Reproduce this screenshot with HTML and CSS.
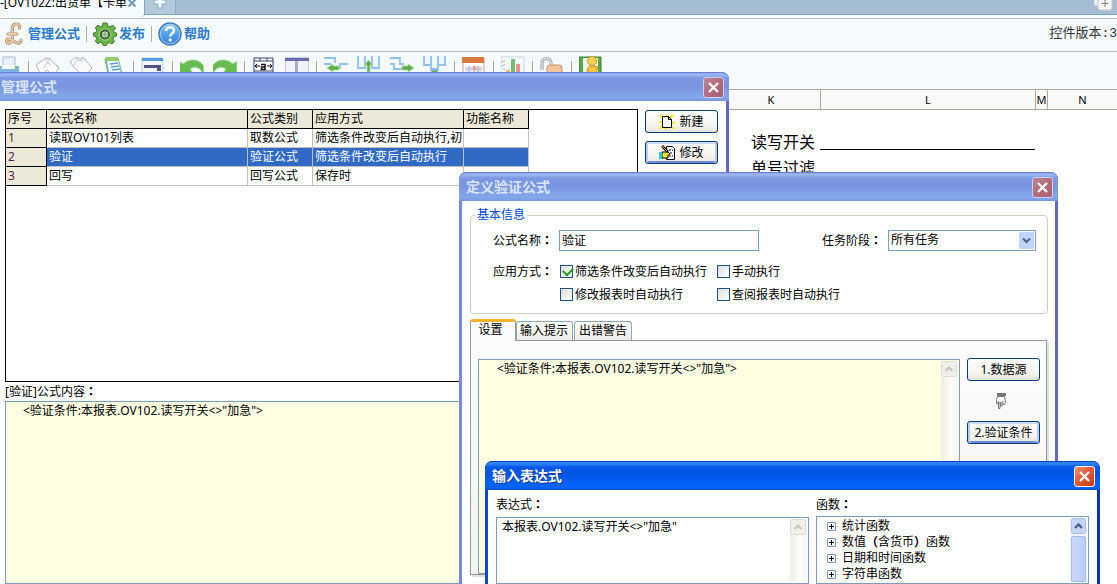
FILE: index.html
```html
<!DOCTYPE html>
<html lang="zh-CN">
<head>
<meta charset="utf-8">
<title>管理公式</title>
<link rel="stylesheet" href="styles.css">
</head>
<body>
<div class="app">
  <div class="tabstrip">
    <div class="doc-tab"><span class="doc-title">-[OV102Z:出货单【卡单</span>
      <svg class="tab-close" width="10" height="10" viewBox="0 0 10 10"><path d="M1.500 1.500l7 7M8.500 1.500l-7 7" stroke="#6f9abd" stroke-width="2"/></svg>
    </div>
    <button class="new-tab" aria-label="新标签"><svg width="14" height="14" viewBox="0 0 14 14"><path d="M5 1h4v4h4v4H9v4H5V9H1V5h4z" fill="#f4f9fd" stroke="#8aa9c2"/></svg></button>
    <button class="tab-list" aria-label="标签列表"><svg width="20" height="20" viewBox="0 0 20 20"><rect x="1" y="1" width="13" height="14" rx="2" fill="#f4f4f4" stroke="#b7c3cd"/><rect x="5" y="5" width="14" height="14" rx="2" fill="#f7f7f7" stroke="#c3cbd2"/><path d="M8.500 12.500h7M12 9v7" stroke="#7c868f"/></svg></button>
  </div>
  <div class="menubar">
    <button class="menu-item formula"><svg width="20" height="24" viewBox="0 0 20 24" fill="none" stroke-linecap="round"><path d="M15.500 6C16 3 14 1.500 11.500 2 7.500 3 8 7 8.500 11c.5 4 .5 9-3 10-3 .8-4-3-1.500-4 4-1 7 5.500 11 4 1.500-.5 2-1.500 2-3M4 12h9" stroke="#9a8068" stroke-width="3"/><path d="M15.500 6C16 3 14 1.500 11.500 2 7.500 3 8 7 8.500 11c.5 4 .5 9-3 10-3 .8-4-3-1.500-4 4-1 7 5.500 11 4 1.500-.5 2-1.500 2-3M4 12h9" stroke="#efc99f" stroke-width="1.800"/></svg><span>管理公式</span></button>
    <i class="menu-sep"></i>
    <button class="menu-item"><svg width="24" height="24" viewBox="0 0 24 24"><path d="M10 1h4l.7 3 2.300 1 2.700-1.800 2.800 2.800L20.500 8.800l.9 2L23.500 11v3l-2.600.7-1 2.300 1.600 2.500-2.500 2.500-2.600-1.600-2.200 1-.7 2.200h-3.300l-.8-2.500-2.200-.9L4.800 21.800 2.300 19.400l1.500-2.700-.9-2.100L.5 14v-3l2.500-.7.9-2.200L2.300 5.700 4.900 3.200l2.500 1.500 2-.8z" fill="#67b545" stroke="#3d7a2b"/><circle cx="12" cy="12.500" r="6.500" fill="#91cc6d"/><circle cx="12" cy="12.500" r="4" fill="#edf7ea" stroke="#3b5a3b" stroke-width="2"/><path d="M9 12.500l3-3 3 3-3 3z" fill="#8dba78"/></svg><span>发布</span></button>
    <i class="menu-sep"></i>
    <button class="menu-item help"><svg width="24" height="24" viewBox="0 0 24 24"><defs><linearGradient id="blue" x2="0" y2="1"><stop stop-color="#8fc9f5"/><stop offset=".5" stop-color="#4fa0ec"/><stop offset="1" stop-color="#2f80d8"/></linearGradient></defs><circle cx="12" cy="12" r="11" fill="url(#blue)" stroke="#3e79b4" stroke-width="1.500"/><circle cx="12" cy="12" r="9.800" fill="none" stroke="#b5dcfa" stroke-width=".8"/><path d="M8 9c0-5 8-5 8-.5 0 3-3.800 3-3.800 6" fill="none" stroke="#fff" stroke-width="2.600"/><circle cx="12.200" cy="18" r="1.700" fill="#fff"/></svg><span>帮助</span></button>
    <span class="version">控件版本:3</span>
  </div>
  <div class="toolbar">
    <div class="group">
      <svg viewBox="0 0 24 24"><path d="M6 1h12v10H6z" fill="#e5f1fc" stroke="#a5bfd9"/><path d="M0 10h22v8H0z" fill="#7db5ea"/><path d="M5 9h13v4H5z" fill="#fff"/><path d="M18 11h2v2h-2z" fill="#75cf59"/></svg>
    </div>
    <div class="group">
      <svg viewBox="0 0 24 24" fill="#fafafa" stroke="#b4b4b4"><path d="M0 9l10-7 4 1 9 9-6 8-6-6-6 5z"/><path d="M10 2l1 4 4 3M14 3l-4 5-3 5" stroke="#c8c8c8" fill="none"/></svg>
      <svg viewBox="0 0 24 24" fill="#fafafa" stroke="#b4b4b4"><path d="M1 6l6-5 4 2 3-2 9 11-8 9L4 10z"/><path d="M7 1l1 3 5 1 1-4M8 4l-4 6" fill="none" stroke="#c8c8c8"/></svg>
      <svg viewBox="0 0 24 24"><path d="M3 3l13-1 5 20H7z" fill="#65aedc" stroke="#7cbb55"/><path d="M5 5l11-1 4 18H8z" fill="#f3faff"/><path d="M3 1h12l2 4H5z" fill="#93ce6a"/><path d="M8 8l8-1M9 11l8-1M10 14l8-1" stroke="#5d9fd0" stroke-width="1.500"/></svg>
    </div>
    <div class="group">
      <svg viewBox="0 0 24 24"><path d="M1 2h21v20H1z" fill="#f1f5fa" stroke="#c7d5e3"/><path d="M1 2h21v3H1z" fill="#559be5"/><path d="M3 9h17v6h-4v-3H3z" fill="#51557f"/></svg>
    </div>
    <div class="group">
      <svg viewBox="0 0 24 24"><path d="M-1 5l4 3c7-6 15-5 20 1 1 3 1 6 0 9-2-6-8-9-13-5l3 4H-1z" fill="#65bd50" stroke="#a0d78e"/></svg>
      <svg viewBox="0 0 24 24"><path d="M24 5l-4 3C13 2 5 3 0 9c-1 3-1 6 0 9 2-6 8-9 13-5l-3 4h14z" fill="#65bd50" stroke="#a0d78e"/></svg>
    </div>
    <div class="group">
      <svg viewBox="0 0 24 24"><path d="M2 2h19v20H2z" fill="#fff" stroke="#334566"/><path d="M2 5h19M8 2v3M15 2v3M2 15h19" stroke="#334566"/><path d="M3 10h5M20 10h-5M5 8l-2 2 2 2M18 8l2 2-2 2" stroke="#111" fill="none"/><path d="M9 8.500h4v5H9.500v-2.500H13" stroke="#111" stroke-width="1.500" fill="none"/></svg>
      <svg viewBox="0 0 24 24"><path d="M0 2h24v20H0z" fill="#f2f3f7" stroke="#9aa0b8"/><path d="M0 2h24v3H0z" fill="#6c6ab0"/><path d="M10 5h3v17h-3z" fill="#a7abc4"/></svg>
    </div>
    <div class="group">
      <svg viewBox="0 0 24 24" fill="none" stroke="#8fc1ec"><path d="M-1 2h12v5M-1 8h8M16 13V8h8" stroke-width="1.800"/><path d="M3 12l6-4v2h6v4H9v2z" fill="#5cae48" stroke="#aed99e"/></svg>
      <svg viewBox="0 0 24 24" fill="#edf6fd" stroke="#8fc1ec"><path d="M1 0v12h7V0M15 0v12h7V0" stroke-width="1.800"/><path d="M11.500 4l4 5h-2.500v7h-3V9H7.500z" fill="#5cae48" stroke="#aed99e"/></svg>
      <svg viewBox="0 0 24 24" fill="none" stroke="#8fc1ec"><path d="M-1 2h11v6h4M-1 8h5v5h8" stroke-width="1.800"/><path d="M24 12l-6-4v2h-6v4h6v2z" fill="#5cae48" stroke="#aed99e"/></svg>
      <svg viewBox="0 0 24 24" fill="#edf6fd" stroke="#8fc1ec"><path d="M1 0v9h7v4h7V9h7V0M8 0v9M15 0v9" stroke-width="1.800"/><path d="M11.500 19l-4-5h8z" fill="#5cae48"/></svg>
    </div>
    <div class="group">
      <svg viewBox="0 0 24 24"><path d="M1 2h21v20H1z" fill="#fff" stroke="#c5a08c"/><path d="M0 1h22v6H0z" fill="#d67a3e"/><path d="M3 10h17v10H3z" fill="#e5e9f1"/><path d="M3 13h17M7 10v10M12 10v10M16 10v10" stroke="#aab3c7"/><path d="M11 10h3v4h-3z" fill="#efa08a"/></svg>
    </div>
    <div class="group">
      <svg viewBox="0 0 24 24"><path d="M0 1h23v21H0z" fill="#fbfcfd" stroke="#c9d2d9"/><path d="M3 4v16M0 6h3M0 10h3" stroke="#a0a8ad" stroke-dasharray="2 2"/><path d="M10 3h4v19h-4z" fill="#6fbb78"/><path d="M15 8h4v14h-4z" fill="#ec8f91"/><path d="M5 14h4v8H5z" fill="#f0b866"/></svg>
    </div>
    <div class="group">
      <svg viewBox="0 0 24 24"><path d="M2 14V7c0-6 9-6 9 0v5" fill="none" stroke="#929292" stroke-width="3"/><path d="M2 14V7c0-6 9-6 9 0v5" fill="none" stroke="#e5e5e5" stroke-width="1.500"/><rect x="7" y="9" width="15" height="13" rx="3" fill="#f3c59c" stroke="#ca906a"/></svg>
    </div>
    <div class="group">
      <svg viewBox="0 0 24 24"><path d="M0 1h22v21H0z" fill="#55a944" stroke="#34862b"/><path d="M4 2h15v14H4z" fill="#f1f6f8"/><circle cx="13" cy="5" r="4.500" fill="#fbcf4f" stroke="#d9952a"/><path d="M8 17c0-7 3-8 6-7l5 1-2 6z" fill="#fbc63b" stroke="#cf8725"/></svg>
    </div>
  </div>
  <div class="colheads"><span></span><span>K</span><span>L</span><span>M</span><span>N</span></div>
  <div class="sheet">
    <label class="sheet-label" for="rw">读写开关</label><input id="rw" class="sheet-line">
    <span class="sheet-label">单号过滤</span>
  </div>
</div>

<section class="window manager">
  <header class="titlebar"><h1>管理公式</h1><button class="close" aria-label="关闭"><svg viewBox="0 0 13 13"><path d="M2 2l9 9M11 2l-9 9"/></svg></button></header>
  <div class="manager-body">
    <div class="manager-main">
      <div class="listbox">
        <table class="formulas">
          <colgroup><col class="c-no"><col class="c-name"><col class="c-type"><col class="c-mode"><col class="c-type"></colgroup>
          <thead><tr><th>序号</th><th>公式名称</th><th>公式类别</th><th>应用方式</th><th>功能名称</th></tr></thead>
          <tbody>
            <tr><th class="first">1</th><td>读取OV101列表</td><td>取数公式</td><td>筛选条件改变后自动执行,初</td><td></td></tr>
            <tr class="selected"><th>2</th><td>验证</td><td>验证公式</td><td>筛选条件改变后自动执行</td><td></td></tr>
            <tr><th>3</th><td>回写</td><td>回写公式</td><td>保存时</td><td></td></tr>
          </tbody>
        </table>
      </div>
      <label class="content-label" for="content">[验证]公式内容<span class="colon">：</span></label>
      <textarea id="content" class="memo yellow" readonly>&lt;验证条件:本报表.OV102.读写开关&lt;&gt;"加急"&gt;</textarea>
    </div>
    <div class="manager-actions">
      <button class="btn"><svg width="16" height="16" viewBox="0 0 16 16"><path d="M1 1l3 3M7 0v3M14 1l-3 3M0 8h3M1 15l3-3M13 9h3M13 13l2 2M7 13v3" stroke="#f5ee00" stroke-width="2"/><path d="M3.500 2.500h6l3 3v8h-9z" fill="#fff" stroke="#000"/><path d="M9.500 2.500v3h3" fill="none" stroke="#000"/></svg>新建</button>
      <button class="btn default"><svg width="16" height="16" viewBox="0 0 16 16"><path d="M7.500 1.500h6l2 2v11h-8z" fill="#fff" stroke="#000"/><path d="M10 5h4M11 8h3M10 11h4" stroke="#000" stroke-dasharray="2 1"/><path d="M3 7h6l2 2-2 1v3H3z" fill="#f7ed35" stroke="#000"/><path d="M0 7h3v7H0z" fill="#28cbe0"/><path d="M3 1l6 6" stroke="#000" stroke-width="2.500"/><path d="M3 1l5 5" stroke="#e3a32f"/></svg>修改</button>
    </div>
  </div>
</section>

<section class="window definer">
  <header class="titlebar"><h2>定义验证公式</h2><button class="close" aria-label="关闭"><svg viewBox="0 0 13 13"><path d="M2 2l9 9M11 2l-9 9"/></svg></button></header>
  <div class="definer-body">
    <fieldset class="basic">
      <legend>基本信息</legend>
      <div class="row name-row">
        <label for="fname">公式名称<span class="colon">：</span></label><input id="fname" class="field" value="验证">
        <label for="stage" class="stage-label">任务阶段<span class="colon">：</span></label>
        <span class="combo"><select id="stage"><option>所有任务</option></select><svg width="15" height="17" viewBox="0 0 15 17"><rect width="15" height="17" rx="1" fill="#c2d3fc"/><path d="M4 6.500l3.500 3.500L11 6.500" fill="none" stroke="#4d6185" stroke-width="2"/></svg></span>
      </div>
      <div class="modes">
        <span>应用方式<span class="colon">：</span></span>
        <label><input type="checkbox" checked>筛选条件改变后自动执行</label>
        <label><input type="checkbox">手动执行</label>
        <label class="second"><input type="checkbox">修改报表时自动执行</label>
        <label><input type="checkbox">查阅报表时自动执行</label>
      </div>
    </fieldset>
    <div class="tabs" role="tablist"><button class="tab active" role="tab">设置</button><button class="tab" role="tab">输入提示</button><button class="tab" role="tab">出错警告</button></div>
    <div class="panel">
      <div class="memo-box yellow-box"><textarea class="memo yellow" aria-label="验证条件">&lt;验证条件:本报表.OV102.读写开关&lt;&gt;"加急"&gt;</textarea>
        <div class="scroll"><svg width="17" height="17" viewBox="0 0 17 17"><rect x=".5" y=".5" width="15" height="15" rx="2" fill="#f0f0ea" stroke="#dddccf"/><path d="M4.500 10L8 6.500l3.500 3.500" fill="none" stroke="#c5c5ba" stroke-width="2"/></svg></div></div>
      <div class="steps">
        <button class="btn">1.数据源</button>
        <svg class="hand" width="12" height="18" viewBox="0 0 12 18"><path d="M2 1h9v3H2z" fill="#777"/><path d="M2.500 4.500h7l1 6-1 2H8V9M2.500 4.500l-1 3v4h2M3.500 9v7.500H5V10M5.500 10v4H7v-4" fill="#fff" stroke="#777"/></svg>
        <button class="btn default">2.验证条件</button>
      </div>
    </div>
  </div>
</section>

<section class="window expression active-window">
  <header class="titlebar"><h2>输入表达式</h2><button class="close" aria-label="关闭"><svg viewBox="0 0 13 13"><path d="M2 2l9 9M11 2l-9 9"/></svg></button></header>
  <div class="expression-body">
    <div class="expr-col">
      <label for="expr">表达式<span class="colon">：</span></label>
      <div class="memo-box"><textarea id="expr" class="memo">本报表.OV102.读写开关&lt;&gt;"加急"</textarea>
        <div class="scroll"><svg width="17" height="17" viewBox="0 0 17 17"><rect x=".5" y=".5" width="15" height="15" rx="2" fill="#f0f0ea" stroke="#dddccf"/><path d="M4.500 10L8 6.500l3.500 3.500" fill="none" stroke="#c5c5ba" stroke-width="2"/></svg></div></div>
    </div>
    <div class="func-col">
      <span>函数<span class="colon">：</span></span>
      <div class="memo-box">
        <ul class="tree">
          <li><i></i>统计函数</li><li><i></i>数值<span class="colon">（</span>含货币<span class="colon">）</span>函数</li><li><i></i>日期和时间函数</li><li><i></i>字符串函数</li>
        </ul>
        <div class="scroll blue"><svg width="17" height="17" viewBox="0 0 17 17"><rect x="1.500" y=".5" width="14" height="15" rx="2" fill="#c5d5fd" stroke="#a9bff2"/><path d="M5 10l3.500-3.500L12 10" fill="none" stroke="#4d6185" stroke-width="2.400"/></svg><b></b></div>
      </div>
    </div>
  </div>
</section>
</body>
</html>
```
FILE: styles.css
```css
* { box-sizing: border-box; }
html, body { height: 100%; }
body {
  margin: 0;
  position: relative;
  overflow: hidden;
  background: #fff;
  color: #000;
  font: 12px/16px "Noto Sans", "Noto Sans CJK SC", sans-serif;
}
button, input, textarea, select { font: inherit; color: inherit; margin: 0; }
svg { display: block; flex: none; }
h1, h2 { margin: 0; font-size: 14px; line-height: 20px; font-weight: 700; }
.colon { font-family: "Noto Sans CJK TC", sans-serif; font-weight: 700; font-feature-settings: "locl" 0; }

/* Application frame */
.app { display: flex; flex-direction: column; height: 100%; }
.tabstrip {
  display: flex;
  flex: none;
  height: 27px;
  margin-top: -12px;
  background: #a5bdd2;
  border-bottom: 1px solid #7ea5c6;
}
.doc-tab {
  display: flex;
  align-items: center;
  justify-content: space-between;
  width: 145px;
  height: 29px;
  padding: 0 8px 0 0;
  background: #f5faff;
  border-right: 1px solid #7ea5c6;
  border-radius: 0 0 4px 0;
  white-space: nowrap;
}
.new-tab {
  width: 31px;
  padding: 2px 0 0 8px;
  border: 0;
  border-right: 1px solid #8eabc5;
  background: #b3c9dc;
}
.tab-list { margin-left: auto; padding: 0 4px 0 0; border: 0; background: none; }
.menubar {
  display: flex;
  flex: none;
  align-items: center;
  height: 34px;
  margin-top: 3px;
  padding: 0 0 3px 4px;
  border: 1px solid #b9bdc0;
  border-width: 1px 0;
  background: #f5faff;
}
.menu-item {
  display: flex;
  align-items: center;
  gap: 2px;
  padding: 0;
  border: 0;
  background: none;
  color: #2a7bcb;
  font-size: 13px;
  font-weight: 700;
}
.menu-item span { padding-bottom: 2px; }
.formula { gap: 4px; }
.menu-sep { width: 1px; height: 16px; margin: 0 6px; background: #b0a89c; }
.version { margin-left: auto; color: #333; font-size: 13px; font-family: "Liberation Mono", "Noto Sans CJK SC", monospace; }
.toolbar {
  display: flex;
  flex: none;
  height: 37px;
  padding-top: 4px;
  background: #f5faff;
}
.group { display: flex; gap: 9px; }
.group:first-child { margin-left: -3px; }
.group + .group::before { content: ""; width: 1px; height: 20px; margin: 5px -2px 0 7px; background: #aaa396; }
.group svg { width: 24px; height: 24px; }
.colheads {
  display: grid;
  grid-template-columns: 722px 99px 215px 12px 1fr;
  flex: none;
  height: 21px;
  border: 1px solid #aca899;
  border-width: 1px 0;
  background: #f9f9f9;
  font-size: 11px;
  line-height: 20px;
  text-align: center;
}
.colheads span + span { border-right: 1px solid #aca899; }
.colheads span:last-child { border: 0; }
.sheet {
  display: grid;
  grid-template-columns: 69px 215px;
  grid-auto-rows: 26px;
  padding: 19px 0 0 751px;
  font-size: 16px;
  line-height: 26px;
}
.sheet-label { white-space: nowrap; }
.sheet-line { height: 21px; border: 0; border-bottom: 1px solid #000; background: none; }

/* Windows */
.window {
  position: absolute;
  bottom: 0;
  display: flex;
  flex-direction: column;
  border: 3px solid #7489df;
  border-right-color: #6368cb;
  border-width: 0 3px;
  border-radius: 8px 8px 0 0;
  background: #fff;
}
.manager { left: -4px; top: 72px; width: 733px; }
.definer { left: 459px; top: 172px; width: 599px; }
.expression { left: 485px; top: 461px; width: 615px; }
.titlebar {
  display: flex;
  flex: none;
  align-items: center;
  justify-content: space-between;
  height: 29px;
  margin: 0 -3px;
  padding: 1px 5px 0 7px;
  border: 1px solid #6b7cd8;
  border-width: 1px 0 0;
  border-radius: 7px 7px 0 0;
  background: linear-gradient(#8facec 0, #9ab5ee 2px, #7d98e2 5px, #7a95e0 14px, #83a8ea 24px, #7893df 29px);
  color: #dae5fb;
}
.titlebar h1, .titlebar h2 { padding-bottom: 2px; }
.manager .titlebar { padding-left: 5px; }
.close {
  width: 21px;
  height: 21px;
  padding: 3px;
  border: 1px solid #c9d2f3;
  border-radius: 3px;
  background: linear-gradient(135deg, #bd8494, #b36b7c 50%, #a8606f);
}
.close svg { width: 13px; height: 13px; stroke: #fff; stroke-width: 2.4; }
.active-window { border-color: #0b47d8; border-right-color: #0831b5; }
.active-window .titlebar {
  border-color: #0a44c4;
  background: linear-gradient(#2a84f8 0, #2f83f5 2px, #0558e8 5px, #0054e3 13px, #0064fa 22px, #0062f5 26px, #0247cf 29px);
  color: #fff;
  text-shadow: 1px 1px #0a318c;
}
.active-window .close { border-color: #fff; background: linear-gradient(135deg, #ee9475, #e25a35 45%, #c93c12); }

/* Shared controls */
.btn {
  display: flex;
  align-items: center;
  justify-content: center;
  gap: 4px;
  width: 73px;
  height: 23px;
  padding: 0;
  border: 1px solid #003c74;
  border-radius: 3px;
  background: linear-gradient(#fff, #f4f3ee 70%, #e6e3da);
  white-space: nowrap;
}
.btn.default { box-shadow: inset 0 2px #cddcfb, inset 2px 0 #b3cbf5, inset -2px 0 #b3cbf5, inset 0 -2px #6f8bdc; }
.memo {
  display: block;
  flex: 1;
  min-width: 0;
  padding: 0 4px;
  border: 0;
  outline: 0;
  resize: none;
  overflow: hidden;
  background: #fff;
}
.memo.yellow { padding-left: 17px; background: #ffffe1; }
.memo-box { display: flex; flex: 1; padding: 1px; border: 1px solid #7f9db9; background: #fff; }
.yellow-box { background: #ffffe1; }
.scroll { width: 17px; background: linear-gradient(90deg, #efeee7, #fdfdfa 60%, #f5f4ee); }
.scroll.blue { display: flex; flex-direction: column; background: #f3f4f8; }
.scroll b { flex: 1; margin: 1px 1px 0; border: 1px solid #a5bbf0; border-radius: 2px 2px 0 0; background: linear-gradient(90deg, #cad8fd, #bccefa); }

/* Formula manager */
.manager-body { display: flex; flex: 1; gap: 7px; padding: 8px 8px 0 6px; }
.manager-main { display: flex; flex-direction: column; flex: 1; }
.manager-actions { display: flex; flex-direction: column; gap: 8px; padding-top: 1px; }
.listbox { flex: 0 0 273px; border: 1px solid #000; }
.formulas { width: 523px; table-layout: fixed; border-collapse: separate; border-spacing: 0; line-height: 18px; }
.c-no { width: 41px; }
.c-name { width: 201px; }
.c-type { width: 65px; }
.c-mode { width: 151px; }
.formulas th, .formulas td {
  height: 19px;
  padding: 0 0 0 2px;
  border: 1px solid #c0c0c0;
  border-width: 0 1px 1px 0;
  text-align: left;
  font-weight: 400;
  white-space: nowrap;
  overflow: hidden;
}
.formulas th { border-color: #000; background: #ece9d8; }
.formulas tbody th { color: #5c2050; }
.formulas tbody th.first { color: #4a3420; }
.formulas .selected td { background: #316ac5; color: #fff; }
.content-label { flex: none; line-height: 18px; }
.manager .memo { padding: 1px 17px; border: 1px solid #7f9db9; }

/* Formula definition */
.definer-body { display: flex; flex: 1; flex-direction: column; padding: 6px 7px 9px 8px; }
.basic { min-width: 0; height: 107px; margin: 0; padding: 7px 11px 0 22px; border: 1px solid #d0d0bf; border-radius: 4px; }
.basic legend { margin-left: -18px; padding: 0 2px; color: #0046d5; }
.row { display: flex; align-items: center; }
.row label { width: 66px; }
.field { width: 200px; height: 21px; padding: 0 2px 2px; border: 1px solid #7f9db9; }
.name-row .stage-label { margin-left: auto; }
.combo { position: relative; width: 148px; height: 21px; border: 1px solid #7f9db9; }
.combo select { width: 100%; height: 19px; padding: 0 2px 1px; border: 0; appearance: none; background: #fff; }
.combo svg { position: absolute; right: 1px; top: 1px; pointer-events: none; }
.modes { display: grid; grid-template-columns: 67px 157px 1fr; grid-auto-rows: 23px; align-items: center; margin-top: 9px; white-space: nowrap; }
.modes .second { grid-column: 2; }
.modes label { display: flex; align-items: center; gap: 2px; }
.modes input { appearance: none; width: 13px; height: 13px; border: 1px solid #1d5281; background: linear-gradient(135deg, #dededa, #fff); }
.modes input:checked::after { content: ""; display: block; width: 8px; height: 5px; margin: 1px 2px; border: solid #21a121; border-width: 0 0 2px 2px; transform: rotate(-45deg); }
.tabs { display: flex; align-items: flex-end; flex: none; height: 21px; margin-top: 5px; }
.tab {
  height: 19px;
  padding: 0 4px;
  border: 1px solid #91a7b4;
  border-bottom: 0;
  border-radius: 3px 3px 0 0;
  background: linear-gradient(#fff, #ecebe6);
  white-space: nowrap;
}
.tab + .tab { padding: 0 4px 0 3px; }
.tab + .tab + .tab { margin-left: 1px; padding: 0 4px; }
.tab.active { z-index: 1; width: 46px; height: 22px; margin-bottom: -1px; padding: 0 12px 3px 7px; border-color: #919b9c; border-top: 3px solid #f9b22f; background: #fcfcfe; }
.panel {
  display: flex;
  flex: 1;
  gap: 7px;
  margin-right: 1px;
  padding: 18px 6px 0 7px;
  border: 1px solid #919b9c;
  background: linear-gradient(#fcfcfe, #f4f3ee);
  box-shadow: 2px 2px #e3e1d5;
}
.panel .btn { flex: none; }
.steps { display: flex; flex-direction: column; align-items: center; gap: 11px; margin-top: -1px; }
.hand { margin-right: 6px; }

/* Expression editor */
.expression-body { display: grid; grid-template-columns: 313px 273px; gap: 7px; flex: 1; padding: 6px 8px 0; }
.expr-col, .func-col { display: flex; flex-direction: column; gap: 3px; }
.expr-col { gap: 4px; }
.tree { flex: 1; margin: 0; padding: 0 0 0 9px; list-style: none; }
.tree li { display: flex; align-items: center; height: 16px; white-space: nowrap; }
.tree i {
  width: 9px;
  height: 9px;
  margin-right: 6px;
  border: 1px solid #7898b5;
  border-radius: 1px;
  background: linear-gradient(#000, #000) 1px 3px / 5px 1px no-repeat, linear-gradient(#000, #000) 3px 1px / 1px 5px no-repeat, #f4f4f0;
}
.tree li { background: linear-gradient(90deg, #b5b5a8 50%, transparent 50%) 10px 8px / 2px 1px no-repeat; }
```
